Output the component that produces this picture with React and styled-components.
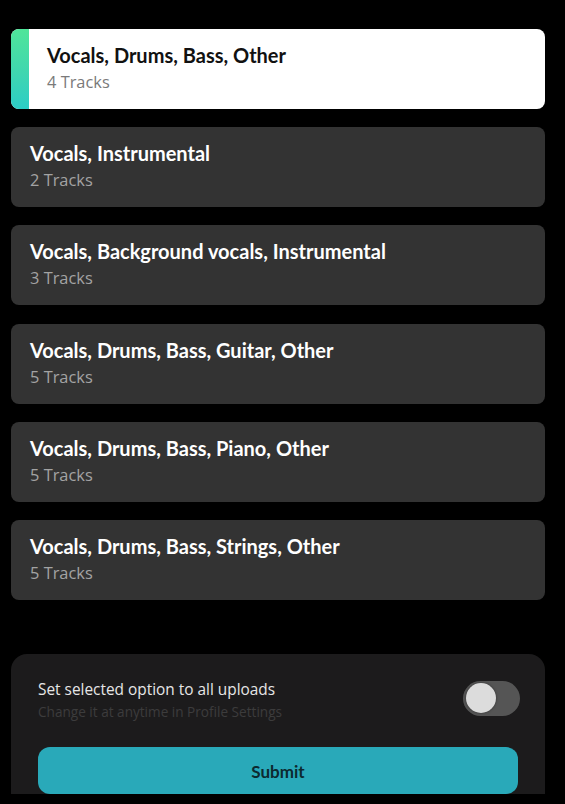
import React, { useState } from "react";
import styled, { createGlobalStyle } from "styled-components";

const Global = createGlobalStyle`
  html, body { margin: 0; padding: 0; background: #000; }
  body { font-family: "Lato", "Noto Sans", sans-serif; -webkit-font-smoothing: antialiased; }
`;

const Page = styled.div`
  width: 565px;
  height: 804px;
  background: #000;
  overflow: hidden;
  display: flex;
  flex-direction: column;
  padding: 29px 20px 0 11px;
  box-sizing: border-box;
`;

const List = styled.div`
  display: flex;
  flex-direction: column;
  gap: 18.2px;
`;

const Card = styled.div`
  height: 80px;
  border-radius: 8px;
  background: ${(p) => (p.$selected ? "#ffffff" : "#333333")};
  display: flex;
  overflow: hidden;
  box-sizing: border-box;
  cursor: pointer;
`;

const Accent = styled.div`
  width: 18px;
  flex: none;
  background: linear-gradient(180deg, #4fe59a 0%, #3fd6b0 55%, #2ccdc6 100%);
`;

const CardBody = styled.div`
  display: flex;
  flex-direction: column;
  padding: 13px 0 0 ${(p) => (p.$selected ? "18px" : "19px")};
`;

const Title = styled.div`
  font-size: 20px;
  font-weight: 700;
  color: ${(p) => (p.$selected ? "#111" : "#fff")};
  line-height: 27px;
`;

const Sub = styled.div`
  font-family: "Open Sans", sans-serif;
  font-size: 16.4px;
  color: ${(p) => (p.$selected ? "#7a7a7a" : "#a3a3a3")};
  line-height: 20px;
  margin-top: 3px;
`;

const Panel = styled.div`
  margin-top: 54px;
  height: 140px;
  background: #1c1b1c;
  border-radius: 16px 16px 0 0;
  padding: 26px 25px 0 27px;
  box-sizing: border-box;
  display: flex;
  flex-direction: column;
`;

const Row = styled.div`
  display: flex;
  align-items: flex-start;
  justify-content: space-between;
`;

const RowText = styled.div`
  display: flex;
  flex-direction: column;
  font-family: "Open Sans", sans-serif;
`;

const RowTitle = styled.div`
  font-size: 15.4px;
  color: #e6e6e6;
  line-height: 20px;
`;

const RowSub = styled.div`
  font-size: 13.6px;
  color: #3c3c3c;
  line-height: 18px;
  margin-top: 3px;
`;

const Toggle = styled.button`
  width: 57px;
  height: 35px;
  border-radius: 18px;
  border: none;
  padding: 0;
  margin-top: 1px;
  background: ${(p) => (p.$on ? "#2aa9b8" : "#555555")};
  position: relative;
  cursor: pointer;
  flex: none;
`;

const Knob = styled.span`
  position: absolute;
  top: 2.5px;
  left: ${(p) => (p.$on ? "24.5px" : "2.5px")};
  width: 30px;
  height: 30px;
  border-radius: 50%;
  background: #dcdcdc;
  box-shadow: 0 0 3px rgba(0, 0, 0, 0.4);
`;

const Submit = styled.button`
  margin-top: 26px;
  margin-right: 2px;
  height: 52px;
  border: none;
  border-radius: 12px;
  background: #29a9b9;
  color: #0c2a30;
  font-family: "Lato", sans-serif;
  font-weight: 700;
  font-size: 17px;
  padding: 3px 0 0 0;
  cursor: pointer;
`;

const options = [
  { title: "Vocals, Drums, Bass, Other", tracks: 4 },
  { title: "Vocals, Instrumental", tracks: 2 },
  { title: "Vocals, Background vocals, Instrumental", tracks: 3 },
  { title: "Vocals, Drums, Bass, Guitar, Other", tracks: 5 },
  { title: "Vocals, Drums, Bass, Piano, Other", tracks: 5 },
  { title: "Vocals, Drums, Bass, Strings, Other", tracks: 5 },
];

export default function App() {
  const [selected, setSelected] = useState(0);
  const [on, setOn] = useState(false);
  return (
    <>
      <Global />
      <Page>
        <List>
          {options.map((o, i) => {
            const s = i === selected;
            return (
              <Card key={i} $selected={s} onClick={() => setSelected(i)}>
                {s && <Accent />}
                <CardBody $selected={s}>
                  <Title $selected={s}>{o.title}</Title>
                  <Sub $selected={s}>{o.tracks} Tracks</Sub>
                </CardBody>
              </Card>
            );
          })}
        </List>
        <Panel>
          <Row>
            <RowText>
              <RowTitle>Set selected option to all uploads</RowTitle>
              <RowSub>Change it at anytime in Profile Settings</RowSub>
            </RowText>
            <Toggle $on={on} onClick={() => setOn(!on)} aria-label="toggle">
              <Knob $on={on} />
            </Toggle>
          </Row>
          <Submit>Submit</Submit>
        </Panel>
      </Page>
    </>
  );
}
